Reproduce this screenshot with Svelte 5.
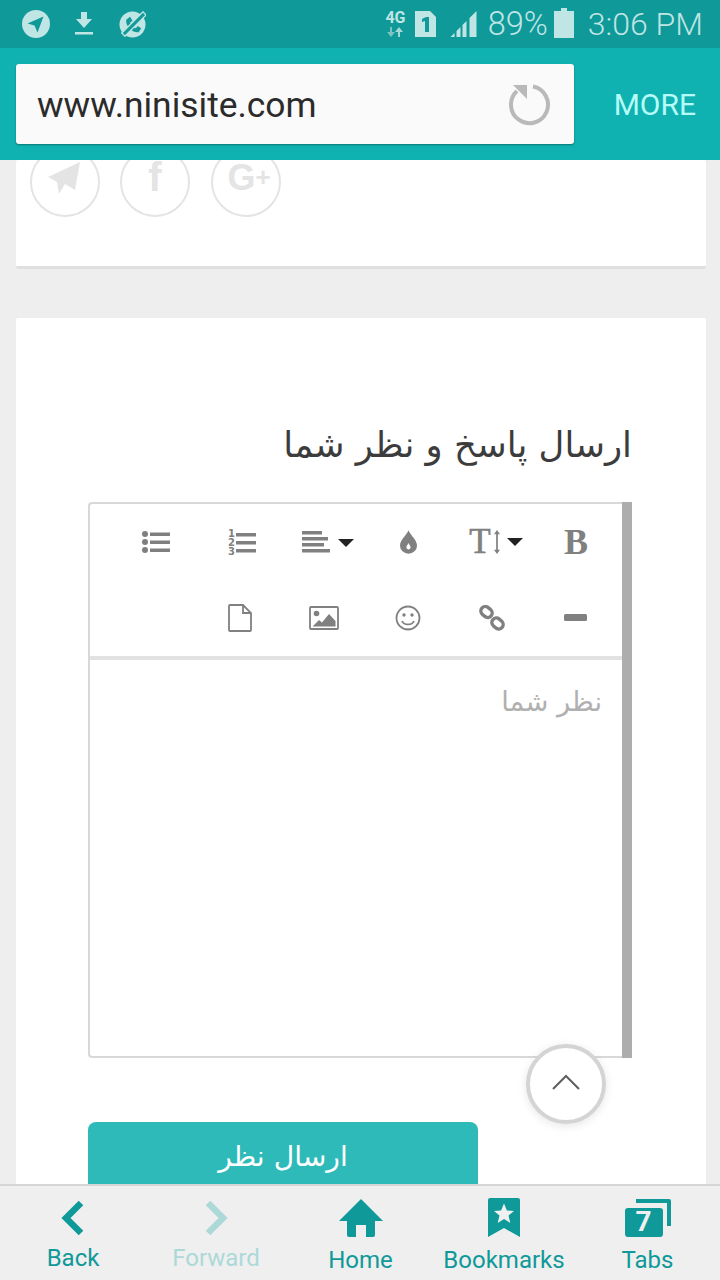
<script>
  const nav = [
    { label: 'Back', kind: 'back' },
    { label: 'Forward', kind: 'forward' },
    { label: 'Home', kind: 'home' },
    { label: 'Bookmarks', kind: 'bookmarks' },
    { label: 'Tabs', kind: 'tabs' }
  ];
</script>

<div class="screen">
  <header class="status">
    <div class="status-left">
      <svg class="s-tele" viewBox="0 0 28 28"><circle cx="14" cy="14" r="14" fill="#bfe5e4"/><path d="M5.500 13.500 21.500 6.500 15.500 22.500 12.500 15.500Z" fill="#0f9999"/></svg>
      <svg class="s-dl" viewBox="0 0 20 24"><path d="M7 0h6v7h5l-8 9-8-9h5Z M1 20h18v2.400H1Z" fill="#bfe5e4"/></svg>
      <svg class="s-off" viewBox="0 0 28 28"><circle cx="14" cy="14" r="13.500" fill="#bfe5e4"/><path d="M7.500 9 11.500 6 14 10 11.500 12C12.500 15 14.500 17 17.500 18L19.500 15.500 23 18 20.500 22C14 23 6.500 15.500 7.500 9Z" fill="#0f9999"/><path d="M27 2 4 25" stroke="#bfe5e4" stroke-width="6" fill="none"/><path d="M26 3 5 24" stroke="#0f9999" stroke-width="3" fill="none"/></svg>
    </div>
    <div class="status-right">
      <div class="net"><span>4G</span><svg viewBox="0 0 16 10"><path d="M3 0V5H0L4 10 8 5H5V0Z" fill="#7cc4c3"/><path d="M11 10V5H8L12 0 16 5H13V10Z" fill="#a5d9d8"/></svg></div>
      <svg class="s-sim" viewBox="0 0 21 26"><path d="M0 0H15L21 6V26H0Z" fill="#bfe5e4"/><path d="M7 8l4-2h3v15h-4V10l-3 1Z" fill="#0f9999"/></svg>
      <svg class="s-signal" viewBox="0 0 26 26"><path d="M0 26 4 22V26Z M6 26V20L10 16V26Z M12 26V14L16 10V26Z M19 26V7L26 0V26Z" fill="#bfe5e4"/></svg>
      <span class="pct">89%</span>
      <svg class="s-bat" viewBox="0 0 20 30"><path d="M7 0h6v3h7v27H0V3h7Z" fill="#bfe5e4"/></svg>
      <span class="time">3:06 PM</span>
    </div>
  </header>

  <div class="toolbar">
    <div class="url">
      <span>www.ninisite.com</span>
      <svg class="reload" viewBox="0 0 44 44"><path d="M25 4.500A18.500 18.500 0 1 1 9 9" fill="none" stroke="#b9b9b9" stroke-width="4"/><path d="M5 3H19V17Z" fill="#b9b9b9"/></svg>
    </div>
    <span class="more">MORE</span>
  </div>

  <main class="content">
    <section class="card card-top">
      <div class="social">
        <div class="circle"><svg class="i-plane" viewBox="0 0 32 32"><path d="M0 15 32 0 27 28 17 22 11 32 9 20Z" fill="#e4e4e4"/></svg></div>
        <div class="circle"><span class="fb">f</span></div>
        <div class="circle"><span class="gp">G<small>+</small></span></div>
      </div>
    </section>

    <section class="card card-form">
      <h2 dir="rtl">ارسال پاسخ و نظر شما</h2>
      <div class="editor">
        <div class="editor-main">
          <div class="tools">
            <div class="row">
              <span class="tool"><svg width="30" height="24" viewBox="0 0 30 24"><g fill="#808080"><circle cx="4" cy="4" r="3"/><circle cx="4" cy="12" r="3"/><circle cx="4" cy="20" r="3"/><rect x="9" y="2.500" width="20" height="3.500"/><rect x="9" y="10.500" width="20" height="3.500"/><rect x="9" y="18.500" width="20" height="3.500"/></g></svg></span>
              <span class="tool nudge-2"><svg width="28" height="28" viewBox="0 0 28 28"><g fill="#808080"><rect x="8" y="5" width="20" height="3.500"/><rect x="8" y="13" width="20" height="3.500"/><rect x="8" y="21" width="20" height="3.500"/></g><text x="0" y="9" class="nums">1</text><text x="0" y="18" class="nums">2</text><text x="0" y="27" class="nums">3</text></svg></span>
              <span class="tool nudge-4"><svg width="52" height="24" viewBox="0 0 52 24"><g fill="#808080"><rect x="0" y="1" width="20" height="3.500"/><rect x="0" y="7" width="26" height="3.500"/><rect x="0" y="13" width="22" height="3.500"/><rect x="0" y="19" width="28" height="3.500"/></g><path d="M36 9H52L44 17Z" fill="#222"/></svg></span>
              <span class="tool"><svg width="17" height="24" viewBox="0 0 16 22"><path d="M8 0C10 5 16 9 16 14.500A8 7.500 0 0 1 0 14.500C0 9 6 5 8 0Z" fill="#808080"/><path d="M8 12c1 2 2 3 2 4a2 2 0 0 1-4 0c0-1 1-2 2-4Z" fill="#fff"/></svg></span>
              <span class="tool ts nudge-4"><span class="glyph-t">T</span><svg width="8" height="24" viewBox="0 0 9 28"><path d="M4.500 0 8 5H5.500V23H8L4.500 28 1 23H3.500V5H1Z" fill="#808080"/></svg><svg class="caret" width="16" height="8" viewBox="0 0 16 8"><path d="M0 0H16L8 8Z" fill="#222"/></svg></span>
              <span class="tool glyph-b">B</span>
            </div>
            <div class="row">
              <span class="tool"></span>
              <span class="tool"><svg width="24" height="28" viewBox="0 0 24 28"><path d="M1 2a1 1 0 0 1 1-1H15L23 9V26a1 1 0 0 1-1 1H2a1 1 0 0 1-1-1ZM15 1V9H23" fill="none" stroke="#808080" stroke-width="1.800"/></svg></span>
              <span class="tool"><svg width="30" height="24" viewBox="0 0 30 24"><rect x="1" y="1" width="28" height="22" rx="1" fill="none" stroke="#808080" stroke-width="1.800"/><circle cx="7.500" cy="7.500" r="2.800" fill="#808080"/><path d="M3.500 20.500 10 14 13 16.500 20 8 26.500 15V20.500Z" fill="#808080"/></svg></span>
              <span class="tool"><svg width="26" height="26" viewBox="0 0 26 26"><circle cx="13" cy="13" r="11.500" fill="none" stroke="#808080" stroke-width="1.800"/><circle cx="9" cy="10" r="1.700" fill="#808080"/><circle cx="17" cy="10" r="1.700" fill="#808080"/><path d="M7 16c2 4.500 10 4.500 12 0" fill="none" stroke="#808080" stroke-width="1.800"/></svg></span>
              <span class="tool"><svg width="26" height="26" viewBox="0 0 26 26"><g fill="none" stroke="#808080" stroke-width="3.400"><rect x="1.500" y="2.500" width="12" height="9" rx="4.500" transform="rotate(40 7.500 7)"/><rect x="12.500" y="14" width="12" height="9" rx="4.500" transform="rotate(40 18.500 18.500)"/></g></svg></span>
              <span class="tool"><svg width="24" height="8" viewBox="0 0 24 8"><rect width="23" height="7" rx="1.500" fill="#808080"/></svg></span>
            </div>
          </div>
          <div class="placeholder" dir="rtl">نظر شما</div>
        </div>
        <div class="bar"></div>
      </div>
      <button class="send">ارسال نظر</button>
    </section>
  </main>

  <div class="to-top">
    <svg width="30" height="18" viewBox="0 0 30 18"><path d="M2 16 15 3 28 16" fill="none" stroke="#5f5f5f" stroke-width="2"/></svg>
  </div>

  <nav class="bottom">
    {#each nav as item}
      <div class="nav-item" class:disabled={item.kind === 'forward'} class:low={item.kind !== 'back' && item.kind !== 'forward'}>
        <div class="nav-icon">
          {#if item.kind === 'back'}
            <svg width="24" height="36" viewBox="0 0 24 36"><path d="M20 3 5 18 20 33" fill="none" stroke="#0f9999" stroke-width="6.500"/></svg>
          {:else if item.kind === 'forward'}
            <svg width="24" height="36" viewBox="0 0 24 36"><path d="M4 3 19 18 4 33" fill="none" stroke="#acd9d8" stroke-width="6.500"/></svg>
          {:else if item.kind === 'home'}
            <svg width="44" height="38" viewBox="0 0 44 38"><path d="M22 0 44 22H36V36a2 2 0 0 1-2 2H27V26H17V38H10a2 2 0 0 1-2-2V22H0Z" fill="#0f9999"/></svg>
          {:else if item.kind === 'bookmarks'}
            <svg width="32" height="40" viewBox="0 0 32 40"><path d="M2 0H30a2 2 0 0 1 2 2V39L16 30 0 39V2a2 2 0 0 1 2-2Z" fill="#0f9999"/><path d="M16 5.500 18.900 12.500 26 13 20.500 17.600 22.300 25 16 21 9.700 25 11.500 17.600 6 13 13.100 12.500Z" fill="#f0f0f0"/></svg>
          {:else}
            <div class="tabs-icon">
              <svg width="46" height="38" viewBox="0 0 46 38"><path d="M11 0H44a2 2 0 0 1 2 2V27H42V4H11Z" fill="#0f9999"/><rect x="0" y="9" width="38" height="29" rx="3" fill="#0f9999"/></svg>
              <span>7</span>
            </div>
          {/if}
        </div>
        <span class="nav-label">{item.label}</span>
      </div>
    {/each}
  </nav>
</div>

<style>
  :global(body) { margin: 0; }
  .screen {
    position: relative;
    width: 720px;
    height: 1280px;
    display: flex;
    flex-direction: column;
    overflow: hidden;
    background: #eeeeee;
    font-family: Roboto, "DejaVu Sans", sans-serif;
  }
  .status {
    height: 48px;
    flex: none;
    background: #0f9999;
    display: flex;
    justify-content: space-between;
    align-items: center;
    padding: 0 17px 0 22px;
    color: #bfe5e4;
  }
  .status-left { display: flex; align-items: center; }
  .s-tele { width: 28px; height: 28px; }
  .s-dl { width: 20px; height: 24px; margin-left: 24px; }
  .s-off { width: 27px; height: 27px; margin-left: 25px; }
  .status-right { display: flex; align-items: center; }
  .net { width: 21px; display: flex; flex-direction: column; align-items: center; }
  .net span { font: 700 16px/13px Roboto, sans-serif; letter-spacing: -0.2px; margin-bottom: 3px; }
  .net svg { width: 16px; height: 10px; }
  .s-sim { width: 21px; height: 26px; margin-left: 9px; }
  .s-signal { width: 27px; height: 26px; margin-left: 14px; }
  .pct { font-size: 32.500px; font-weight: 300; margin-left: 11px; }
  .s-bat { width: 20px; height: 30px; margin-left: 6px; margin-top: -2px; }
  .time { font-size: 32px; font-weight: 300; margin-left: 14px; }

  .toolbar {
    height: 112px;
    flex: none;
    background: #0fb2b0;
    display: flex;
    align-items: center;
    padding: 0 24px 0 16px;
    box-sizing: border-box;
    justify-content: space-between;
    position: relative;
    z-index: 2;
  }
  .url {
    width: 558px;
    height: 80px;
    box-sizing: border-box;
    background: #fafafa;
    border-radius: 3px;
    box-shadow: 0 1px 2px rgba(0, 0, 0, 0.35);
    display: flex;
    align-items: center;
    justify-content: space-between;
    padding: 0 22px 0 21px;
    font-size: 35.400px;
    color: #2b2b2b;
  }
  .url span { margin-top: 2px; }
  .reload { width: 44px; height: 44px; margin-top: -1px; }
  .more { font-size: 30px; color: #b5fbf7; }

  .content {
    flex: 1;
    min-height: 0;
    overflow: hidden;
    padding: 0 14px 0 16px;
    display: flex;
    flex-direction: column;
    gap: 49px;
  }
  .card { background: #fff; border-radius: 2px; flex: none; }
  .card-top { height: 106px; border-bottom: 3px solid #e0e0e0; position: relative; overflow: hidden; }
  .social { display: flex; gap: 20px; padding-left: 14px; margin-top: -13px; }
  .circle {
    width: 70px;
    height: 70px;
    box-sizing: border-box;
    border: 2px solid #e4e4e4;
    border-radius: 50%;
    display: flex;
    align-items: center;
    justify-content: center;
    flex: none;
  }
  .circle:last-child { margin-left: 1px; }
  .i-plane { width: 32px; height: 32px; margin: 0 0 8px -3px; }
  .fb { font: 700 40px/1 "Liberation Sans", sans-serif; color: #e4e4e4; margin-bottom: 10px; }
  .gp { font: 700 36px/1 "Liberation Sans", sans-serif; color: #e4e4e4; margin: 0 0 9px 6px; white-space: nowrap; }
  .gp small { font-size: 26px; vertical-align: 4px; }

  .card-form { flex: 1; padding: 0 0 0 72px; }
  h2 {
    margin: 105px 0 0;
    height: 79px;
    width: 544px;
    font: 400 35.500px/44px "DejaVu Sans", sans-serif;
    color: #3c3c3c;
  }
  .editor { display: flex; width: 544px; height: 556px; }
  .editor-main {
    flex: 1;
    border: 2px solid #d8d8d8;
    border-right: none;
    border-radius: 4px 0 0 4px;
    box-sizing: border-box;
  }
  .bar { width: 10px; background: #adadad; }
  .tools {
    height: 152px;
    border-bottom: 4px solid #e2e2e2;
    display: flex;
    flex-direction: column;
  }
  .row {
    height: 76px;
    flex: none;
    display: grid;
    grid-template-columns: repeat(6, 84px);
    padding-left: 24px;
    align-items: center;
    justify-items: center;
  }
  .tool { display: flex; align-items: center; justify-content: center; height: 40px; }
  .nudge-2 { margin-left: 4px; }
  .nudge-4 { margin-left: 8px; }
  .nums { font: 700 10px "DejaVu Sans", sans-serif; fill: #808080; }
  .ts { gap: 2px; }
  .glyph-t { font: 400 35px/40px "Liberation Serif", serif; color: #808080; -webkit-text-stroke: 0.6px #808080; }
  .caret { margin: -1px 0 0 4px; }
  .glyph-b { font: 700 36px/40px "Liberation Serif", serif; color: #808080; }
  .placeholder {
    padding: 22px 20px 0 0;
    font: 400 27.300px/40px "DejaVu Sans", sans-serif;
    color: #b0b0b0;
  }
  .send {
    display: block;
    margin-top: 64px;
    width: 390px;
    height: 80px;
    border: none;
    border-radius: 8px 8px 0 0;
    background: #2fbaba;
    color: #fff;
    font: 400 28.200px/1 "DejaVu Sans", sans-serif;
    padding: 0 0 9px;
  }

  .to-top {
    position: absolute;
    left: 526px;
    top: 1044px;
    width: 80px;
    height: 80px;
    box-sizing: border-box;
    background: #fff;
    border: 4px solid #d4d4d4;
    border-radius: 50%;
    box-shadow: 0 2px 10px rgba(0, 0, 0, 0.1);
    display: flex;
    align-items: center;
    justify-content: center;
    padding-bottom: 4px;
    z-index: 1;
  }

  .bottom {
    height: 96px;
    flex: none;
    box-sizing: border-box;
    background: #efefef;
    border-top: 2px solid #d6d6d6;
    display: grid;
    grid-template-columns: 146px 140px 149px 138px 147px;
    position: relative;
    z-index: 2;
  }
  .nav-item {
    display: flex;
    flex-direction: column;
    align-items: center;
    color: #0f9999;
    padding-top: 12px;
    box-sizing: border-box;
  }
  .nav-item:last-child { padding-left: 2px; }
  .nav-item.disabled { color: #acd9d8; }
  .nav-icon { height: 39px; display: flex; align-items: center; justify-content: center; }
  .nav-label { font-size: 24px; line-height: 30px; margin-top: 6px; }
  .low .nav-label { margin-top: 8px; }
  .tabs-icon { position: relative; width: 46px; height: 38px; }
  .tabs-icon span {
    position: absolute;
    left: 0;
    top: 8px;
    width: 38px;
    text-align: center;
    font: 700 28px/30px Roboto, sans-serif;
    color: #f0f0f0;
  }
</style>
